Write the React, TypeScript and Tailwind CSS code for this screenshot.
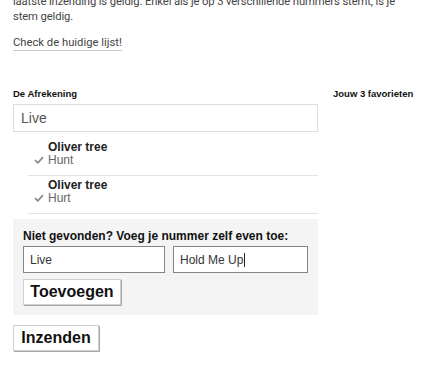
const sans = "font-['Liberation_Sans',Arial,sans-serif]";

function CheckMark() {
  return (
    <svg width="10" height="8" viewBox="0 0 10 8" className="shrink-0">
      <path d="M1 4.2 L3.8 6.8 L9 1.2" fill="none" stroke="#8a8a8a" strokeWidth="1.8" />
    </svg>
  );
}

const songs = [
  { artist: 'Oliver tree', title: 'Hunt' },
  { artist: 'Oliver tree', title: 'Hurt' },
];

export default function App() {
  return (
    <div className="h-[365px] w-[426px] overflow-hidden bg-white px-[13px]">
      <div className="-mt-[6px] font-['Roboto',sans-serif] text-[11.25px] leading-[15px] text-[#444]">
        <p className="whitespace-nowrap tracking-[-0.12px]">
          laatste inzending is geldig. Enkel als je op 3 verschillende nummers stemt, is je
          <br />
          stem geldig.
        </p>
        <div className="mt-[11px] h-[17px]">
          <a className="inline-block border-b border-[#c8c8c8] align-top">Check de huidige lijst!</a>
        </div>
      </div>

      <div className={`mt-[36px] flex gap-[15px] ${sans}`}>
        <div className="w-[305px] shrink-0">
          <div className="text-[9.5px] font-bold leading-[12px] text-[#111]">De Afrekening</div>
          <div className="mt-[4px] flex h-[28px] items-center border border-[#dedede] px-[7px] text-[14px] text-[#555]">
            Live
          </div>

          <ul className="ml-[15px] mt-[6px]">
            {songs.map((s) => (
              <li key={s.title} className="flex border-b border-[#e2e2e2] pb-[8px] pt-[3px]">
                <div className="flex w-[20px] items-end justify-center pb-[3px] pl-[1px]">
                  <CheckMark />
                </div>
                <div className="text-[12px] leading-[13px]">
                  <div className="font-bold text-[#222]">{s.artist}</div>
                  <div className="text-[#666]">{s.title}</div>
                </div>
              </li>
            ))}
          </ul>

          <div className="mt-[5px] bg-[#f4f4f4] px-[10px] pb-[10px] pt-[10px]">
            <div className="text-[12px] font-bold leading-[14px] text-[#111]">
              Niet gevonden? Voeg je nummer zelf even toe:
            </div>
            <div className="mt-[3px] flex gap-[8px]">
              <div className="flex h-[27px] w-[142px] items-center border border-[#858585] bg-white px-[6px] text-[12px] text-[#333]">
                Live
              </div>
              <div className="flex h-[27px] w-[135px] items-center border border-[#858585] bg-white px-[6px] text-[12px] text-[#333]">
                Hold Me Up
                <span className="ml-[1px] inline-block h-[14px] w-px bg-[#222]" />
              </div>
            </div>
            <button
              type="button"
              className="mt-[6px] block h-[26px] w-[98px] border border-[#cfcfcf] bg-white text-[16px] font-bold leading-none text-[#111] shadow-[1px_1px_0_#a8a8a8]"
            >
              Toevoegen
            </button>
          </div>

          <button
            type="button"
            className="mt-[10px] block h-[26px] w-[86px] border border-[#cfcfcf] bg-white text-[16px] font-bold leading-none text-[#111] shadow-[1px_1px_0_#a8a8a8]"
          >
            Inzenden
          </button>
        </div>

        <div className="whitespace-nowrap text-[9.5px] font-bold leading-[12px] text-[#111]">Jouw 3 favorieten</div>
      </div>
    </div>
  );
}
